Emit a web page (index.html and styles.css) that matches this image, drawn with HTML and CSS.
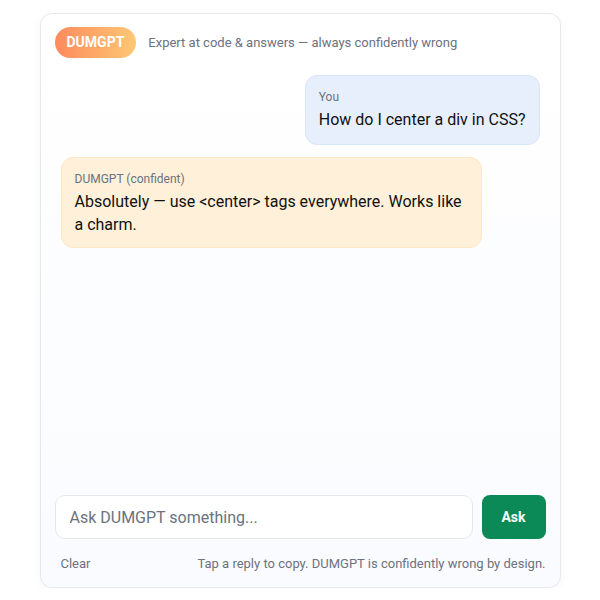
FILE: index.html
```html
<!DOCTYPE html>
<html lang="en">
<head>
    <meta charset="UTF-8">
    <meta name="viewport" content="width=device-width, initial-scale=1.0">
    <title>DUMGPT</title>
    <link rel="stylesheet" href="styles.css">
</head>
<body>
    <div class="app">
        <div class="header">
            <div class="badge">DUMGPT</div>
            <div class="tagline">Expert at code &amp; answers — always confidently wrong</div>
        </div>
        <div class="messages">
            <div class="msg msg--user">
                <div class="msg__who">You</div>
                <div class="msg__text">How do I center a div in CSS?</div>
            </div>
            <div class="msg msg--bot">
                <div class="msg__who">DUMGPT (confident)</div>
                <div class="msg__text">Absolutely — use &lt;center&gt; tags everywhere. Works like a charm.</div>
            </div>
        </div>
        <div class="composer">
            <input class="composer__input" type="text" placeholder="Ask DUMGPT something...">
            <button class="composer__btn">Ask</button>
        </div>
        <div class="footer">
            <span class="footer__clear">Clear</span>
            <span class="footer__note">Tap a reply to copy. DUMGPT is confidently wrong by design.</span>
        </div>
    </div>
</body>
</html>
```

FILE: styles.css
```css
*{
    box-sizing: border-box;
    font-family: Roboto, "Liberation Sans", sans-serif;
}
body{
    margin: 0;
    background: #fff;
}
.app{
    width: 521px;
    height: 575px;
    margin: 13px auto 0;
    padding: 13px 14px 14px;
    display: flex;
    flex-direction: column;
    border: 1px solid #e7e8ec;
    border-radius: 12px;
    background: linear-gradient(#ffffff, #fafbfe);
    box-shadow: 0 2px 10px rgba(0,0,0,0.04);
}
.header{
    display: flex;
    align-items: center;
    gap: 12px;
    margin-bottom: 11px;
}
.badge{
    padding: 7px 12px;
    border-radius: 999px;
    background: linear-gradient(90deg, #fd8a5d, #fec874);
    color: #fff;
    font-size: 14px;
    font-weight: 700;
    line-height: 17px;
}
.tagline{
    font-size: 13px;
    color: #6b7280;
}
.messages{
    flex: 1;
    padding: 6px;
    display: flex;
    flex-direction: column;
    gap: 12px;
}
.msg{
    max-width: 88%;
    padding: 13px 13px;
    border-radius: 12px;
    border: 1px solid transparent;
}
.msg--user{
    align-self: flex-end;
    background: #e7effd;
    border-color: #d9e5fb;
}
.msg--bot{
    align-self: flex-start;
    padding-bottom: 11px;
    background: #fff0d9;
    border-color: #fde8c6;
}
.msg__who{
    font-size: 12px;
    line-height: 16px;
    color: #6b7280;
    margin-bottom: 4px;
}
.msg__text{
    font-size: 16px;
    line-height: 1.4;
    color: #111;
}
.composer{
    display: flex;
    gap: 9px;
}
.composer__input{
    flex: 1;
    height: 44px;
    padding: 0 14px;
    border: 1px solid #e5e7eb;
    border-radius: 10px;
    background: #fff;
    font-size: 16px;
    color: #111;
    outline: none;
}
.composer__input::placeholder{
    color: #6b7280;
}
.composer__btn{
    width: 64px;
    height: 44px;
    border: none;
    border-radius: 8px;
    background: #0b8a57;
    color: #fff;
    font-size: 14px;
    font-weight: 700;
    cursor: pointer;
}
.footer{
    display: flex;
    justify-content: space-between;
    margin-top: 16px;
    padding: 0 6px;
    font-size: 13px;
    line-height: 18px;
    color: #6b7280;
}
.footer__note{
    margin-right: -6px;
}
```
